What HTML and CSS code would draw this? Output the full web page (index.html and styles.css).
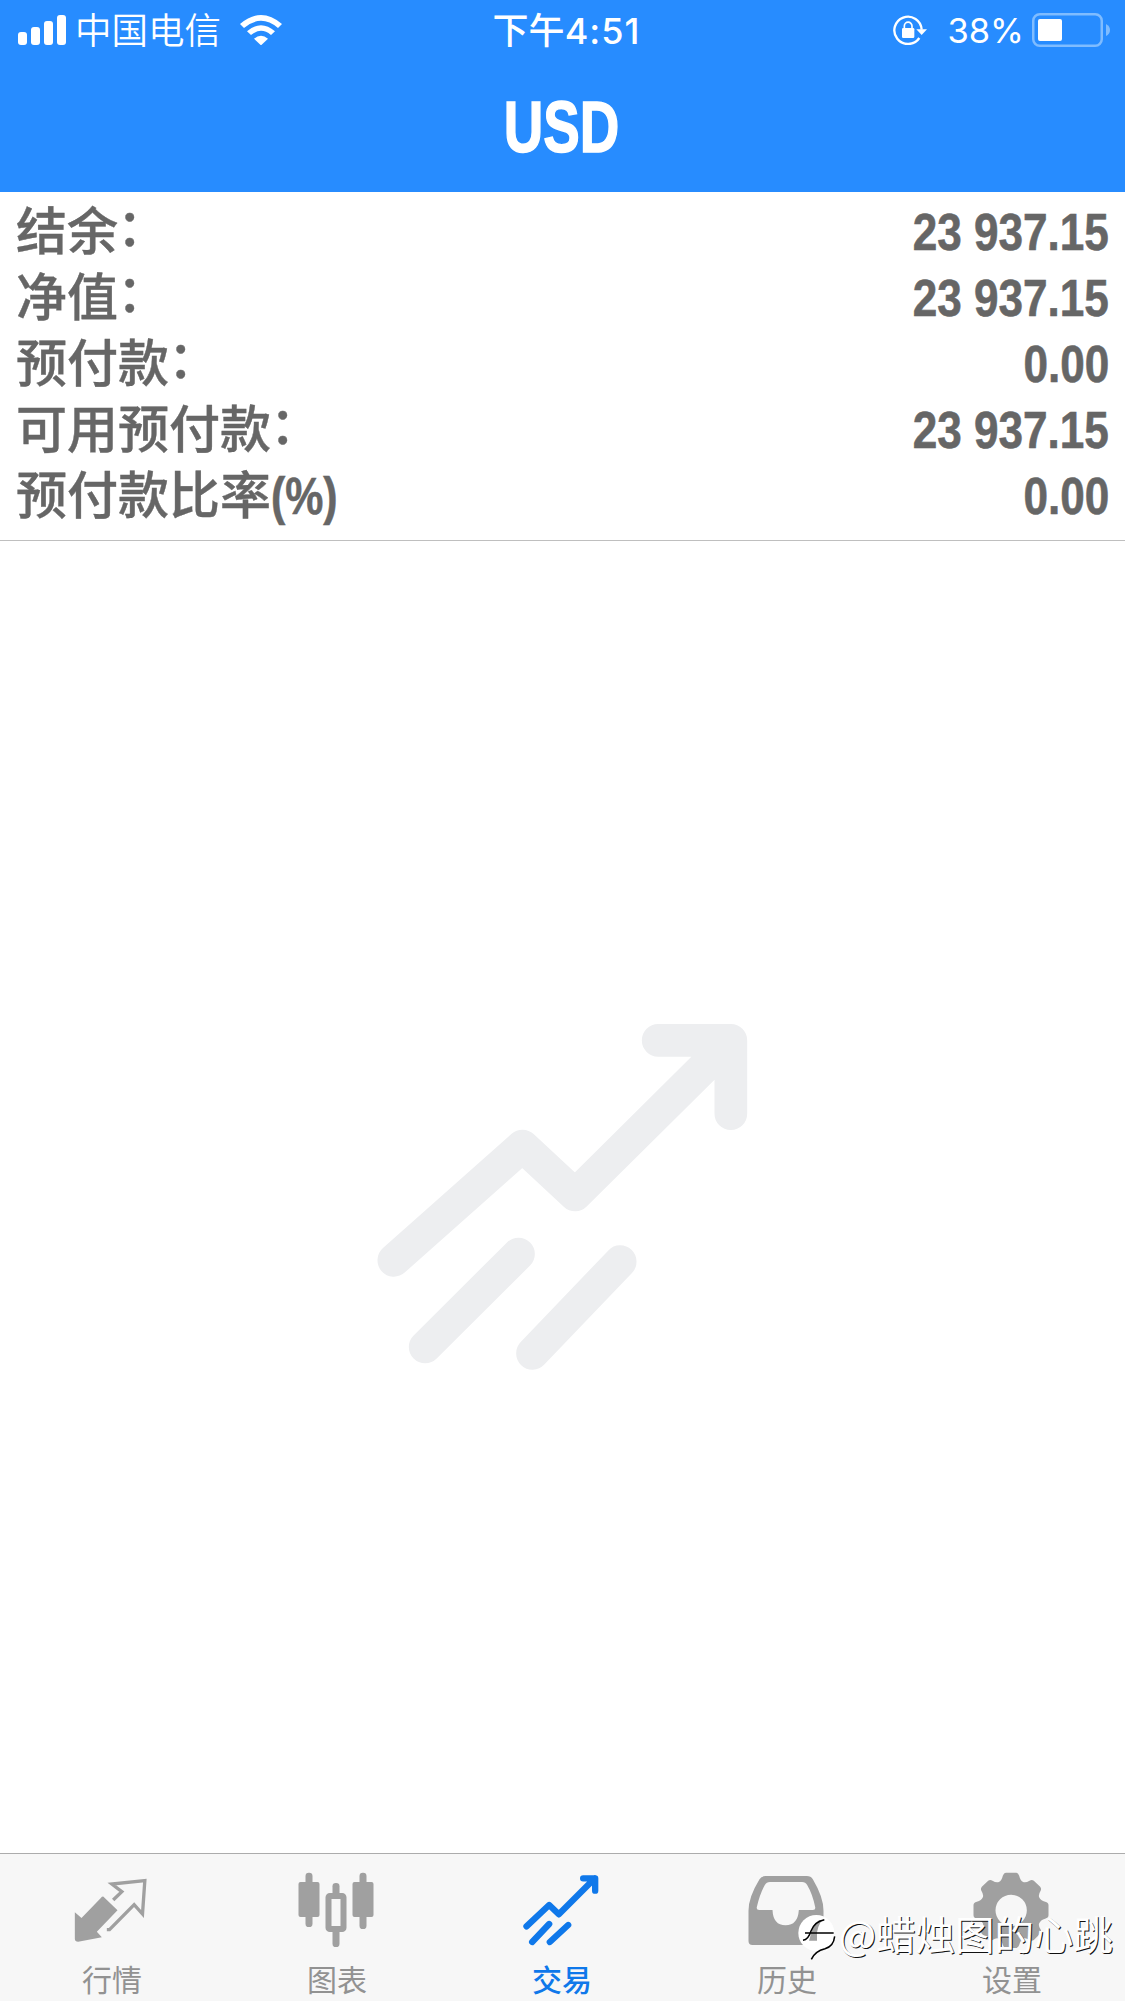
FILE: index.html
```html
<!DOCTYPE html>
<html lang="zh-CN">
<head>
  <meta charset="UTF-8" />
  <meta name="viewport" content="width=device-width, initial-scale=1.0"/>
  <title>USD</title>
  <link rel="stylesheet" href="styles.css">
</head>
<body>
  <header>
    <div class="status-bar">
      <div class="status-left">
        <svg class="signal" viewBox="0 0 48 30">
          <rect x="0" y="17" width="9" height="13" rx="3"/>
          <rect x="13" y="12" width="9" height="18" rx="3"/>
          <rect x="26" y="6" width="9" height="24" rx="3"/>
          <rect x="39" y="0" width="9" height="30" rx="3"/>
        </svg>
        <span class="carrier">中国电信</span>
        <svg class="wifi" viewBox="0 0 126 90">
          <path d="M0 27Q63 -27 126 27L114 39Q63 -4 12 39Z"/>
          <path d="M21 49Q63 13 105 49L93 60Q63 35 33 60Z"/>
          <path d="M42 71Q63 54 84 71L63 91Z"/>
        </svg>
      </div>
      <div class="status-time">下午<span>4:51</span></div>
      <div class="status-right">
        <svg class="lock" viewBox="0 0 102 90">
          <path d="M79 69A41 41 0 1 1 86 44" fill="none" stroke="#fff" stroke-width="7"/>
          <path d="M70 43H102L86 60Z"/>
          <rect x="27" y="39" width="37" height="30" rx="4"/>
          <path d="M34 40V33a11.500 11.500 0 0 1 23 0V40" fill="none" stroke="#fff" stroke-width="5"/>
        </svg>
        <span class="percent">38%</span>
        <svg class="battery" viewBox="0 0 78 34">
          <rect x="1.250" y="1.250" width="68.500" height="31.500" rx="6.500" fill="none" stroke="#7fbcff" stroke-width="2.500"/>
          <rect x="6" y="6" width="24" height="22" rx="2"/>
          <path d="M74 11Q78 13 78 17T74 23Z" fill="#7fbcff"/>
        </svg>
      </div>
    </div>
    <h1>USD</h1>
  </header>

  <section class="account">
    <div class="row"><span class="label">结余<i>：</i></span><span class="value">23 937.15</span></div>
    <div class="row"><span class="label">净值<i>：</i></span><span class="value">23 937.15</span></div>
    <div class="row"><span class="label">预付款<i>：</i></span><span class="value">0.00</span></div>
    <div class="row"><span class="label">可用预付款<i>：</i></span><span class="value">23 937.15</span></div>
    <div class="row"><span class="label">预付款比率<b>(%)</b></span><span class="value">0.00</span></div>
  </section>

  <main>
    <svg class="empty-icon" viewBox="37.5 -9 1200 1200">
      <path d="M130 781L516 438L674 585L1141 122M923 121H1141V341M504 762L224 1041M809 785L546 1060"/>
    </svg>
  </main>

  <nav>
    <div class="tab">
      <svg viewBox="187.5 60 300 270">
        <path d="M312 170L354 211L292 275L307 292L236 305Q226 305 226 296V217L246 234L304 174Q308 169 312 170Z"/>
        <path d="M341 180L367 155L337 132L436 122L429 222L404 194L330 269H322" fill="none" stroke="#a0a0a0" stroke-width="10"/>
      </svg>
      <span>行情</span>
    </div>
    <div class="tab">
      <svg viewBox="862.5 60 300 270">
        <rect x="897" y="126" width="63" height="105" rx="6"/>
        <rect x="918" y="98" width="21" height="163" rx="10"/>
        <rect x="1059" y="126" width="63" height="105" rx="6"/>
        <rect x="1080" y="98" width="21" height="169" rx="10"/>
        <rect x="999" y="129" width="21" height="45" rx="10"/>
        <rect x="999" y="262" width="21" height="59" rx="10"/>
        <rect x="987" y="168" width="45" height="99" rx="4" fill="none" stroke="#a0a0a0" stroke-width="18"/>
      </svg>
      <span>图表</span>
    </div>
    <div class="tab active">
      <svg viewBox="97.5 60 300 270">
        <path d="M141 259L209 195L238 223L346 115M311 115H347V152M209 252L158 306M266 255L211 306"/>
      </svg>
      <span>交易</span>
    </div>
    <div class="tab">
      <svg viewBox="37.5 60 300 270">
        <path fill-rule="evenodd" d="M123 108H247Q259 108 265 118Q297 172 297 212V303Q297 315 285 315H84Q72 315 72 303V212Q72 172 105 118Q111 108 123 108ZM136 126Q126 126 121 135Q106 162 97 201Q95 210 104 210H144Q146 256 183 256Q220 256 223 210H265Q274 210 272 201Q264 162 248 135Q243 126 233 126Z"/>
      </svg>
      <span>历史</span>
    </div>
    <div class="tab">
      <svg viewBox="712.5 60 300 270">
        <path fill-rule="evenodd" d="M844 98H875Q881 98 884 107Q888 123 896 126Q904 129 915 122Q922 118 928 122L947 140Q952 146 948 153Q941 164 944 172Q948 182 962 185Q972 188 972 195V226Q972 234 962 236Q948 240 944 250Q941 258 948 268Q952 275 947 281L928 300Q922 304 915 300Q904 293 896 296Q888 300 884 315Q881 324 875 324H844Q838 324 835 315Q831 300 823 296Q815 293 804 300Q797 304 791 300L772 281Q767 275 771 268Q778 258 775 250Q771 240 757 236Q747 234 747 226V195Q747 188 757 185Q771 182 775 172Q778 164 771 153Q767 146 772 140L791 122Q797 118 804 122Q815 129 823 126Q831 123 835 107Q838 98 844 98ZM860 164A47 47 0 1 0 860 258A47 47 0 1 0 860 164Z"/>
      </svg>
      <span>设置</span>
    </div>
  </nav>

  <div class="watermark">
    <svg viewBox="0 0 120 138">
      <circle cx="58" cy="54" r="54" fill="#fff"/>
      <path d="M44 134Q70 122 92 106L112 70Q104 104 44 134Z" fill="#fff"/>
      <path d="M36 77Q40 64 48 36Q54 22 66 16H76Q68 24 64 36L60 52V77Z" fill="#a0a0a0"/>
      <path d="M18 76Q34 74 42 48Q52 20 82 14M24 54H110" fill="none" stroke="#000" stroke-width="4.500"/>
      <path d="M113 64Q110 94 84 101Q54 108 43 133" fill="none" stroke="#000" stroke-width="4.500"/>
    </svg>
    <span>@蜡烛图的心跳</span>
  </div>
</body>
</html>
```
FILE: styles.css
```css
:root {
  --blue: #278cff;
  --active: #0f78ea;
  --text: #666;
  --gray: #a0a0a0;
}

* { margin: 0; padding: 0; box-sizing: border-box; }

body {
  font-family: Inter, "Noto Sans CJK SC", sans-serif;
  background: #fff;
  color: var(--text);
  height: 2001px;
  display: flex;
  flex-direction: column;
  position: relative;
  overflow: hidden;
}

svg { display: block; flex: none; }

header {
  background: var(--blue);
  color: #fff;
  height: 192px;
}

.status-bar {
  display: grid;
  grid-template-columns: 1fr auto 1fr;
  align-items: center;
  height: 60px;
  padding: 0 15px 0 18px;
  font-size: 36px;
  line-height: 60px;
  fill: #fff;
}

.status-left, .status-right {
  display: flex;
  align-items: center;
}

.status-right { justify-content: flex-end; }

.signal { width: 48px; height: 30px; }
.carrier { margin-left: 9px; padding-top: 3px; line-height: 57px; font-size: 36.500px; font-weight: 350; }
.wifi { width: 42px; height: 30px; margin-left: 19px; }
.status-time { font-weight: 500; padding: 3px 0 0 5px; line-height: 57px; }
.status-time span { letter-spacing: 1px; }
.lock { width: 34px; height: 30px; }
.percent { margin: 0 8px 0 20px; padding-top: 2px; line-height: 58px; font-size: 34.500px; }
.battery { width: 78px; height: 34px; }

h1 {
  font-family: "Liberation Sans", sans-serif;
  font-size: 73px;
  line-height: 133px;
  text-align: center;
  transform: translateX(-1px) scaleX(0.75);
  -webkit-text-stroke: 1.500px #fff;
}

.account {
  padding: 6px 16px 12px;
  border-bottom: 1px solid #bfbfbf;
  height: 349px;
}

.row {
  display: flex;
  justify-content: space-between;
  height: 66px;
  font-size: 51px;
}

.label {
  font-family: "Noto Sans CJK SC", sans-serif;
  font-weight: 500;
  line-height: 61px;
  -webkit-text-stroke: 0.400px var(--text);
}

.label i {
  display: inline-block;
  font-style: normal;
  transform: translate(-1px, -4px);
}

.value, .label b {
  display: inline-block;
  font-family: "Liberation Sans", sans-serif;
  font-weight: bold;
  line-height: 69px;
  transform: scaleX(0.865);
  transform-origin: right;
  -webkit-text-stroke: 0.600px var(--text);
}

.label b {
  line-height: 1;
  transform: scaleX(0.84);
  transform-origin: left;
}

main {
  flex: 1;
  display: flex;
  align-items: center;
  justify-content: center;
}

.empty-icon {
  width: 400px;
  height: 400px;
  fill: none;
  stroke: #edeef0;
  stroke-width: 98;
  stroke-linecap: round;
  stroke-linejoin: round;
}

nav {
  display: flex;
  height: 148px;
  background: #f7f7f7;
  border-top: 1px solid #acacac;
}

.tab {
  flex: 1;
  display: flex;
  flex-direction: column;
  align-items: center;
  padding: 6px 1px 0 0;
  font-family: "Noto Sans CJK SC", sans-serif;
  font-size: 30px;
  line-height: 57px;
  color: #929292;
}

.tab svg {
  width: 100px;
  height: 90px;
  fill: var(--gray);
}

.tab.active { color: var(--active); font-weight: 500; }

.tab.active svg {
  fill: none;
  stroke: var(--active);
  stroke-width: 19;
  stroke-linecap: round;
  stroke-linejoin: round;
}

.watermark {
  position: absolute;
  right: 12px;
  bottom: 40px;
  display: flex;
  align-items: center;
  gap: 2px;
  color: #fff;
  font-family: "Noto Sans CJK SC", sans-serif;
  font-size: 39.500px;
  line-height: 50px;
  text-shadow: 1px 1px 0 #111;
}

.watermark svg { width: 40px; height: 46px; margin-top: 10px; }
```
